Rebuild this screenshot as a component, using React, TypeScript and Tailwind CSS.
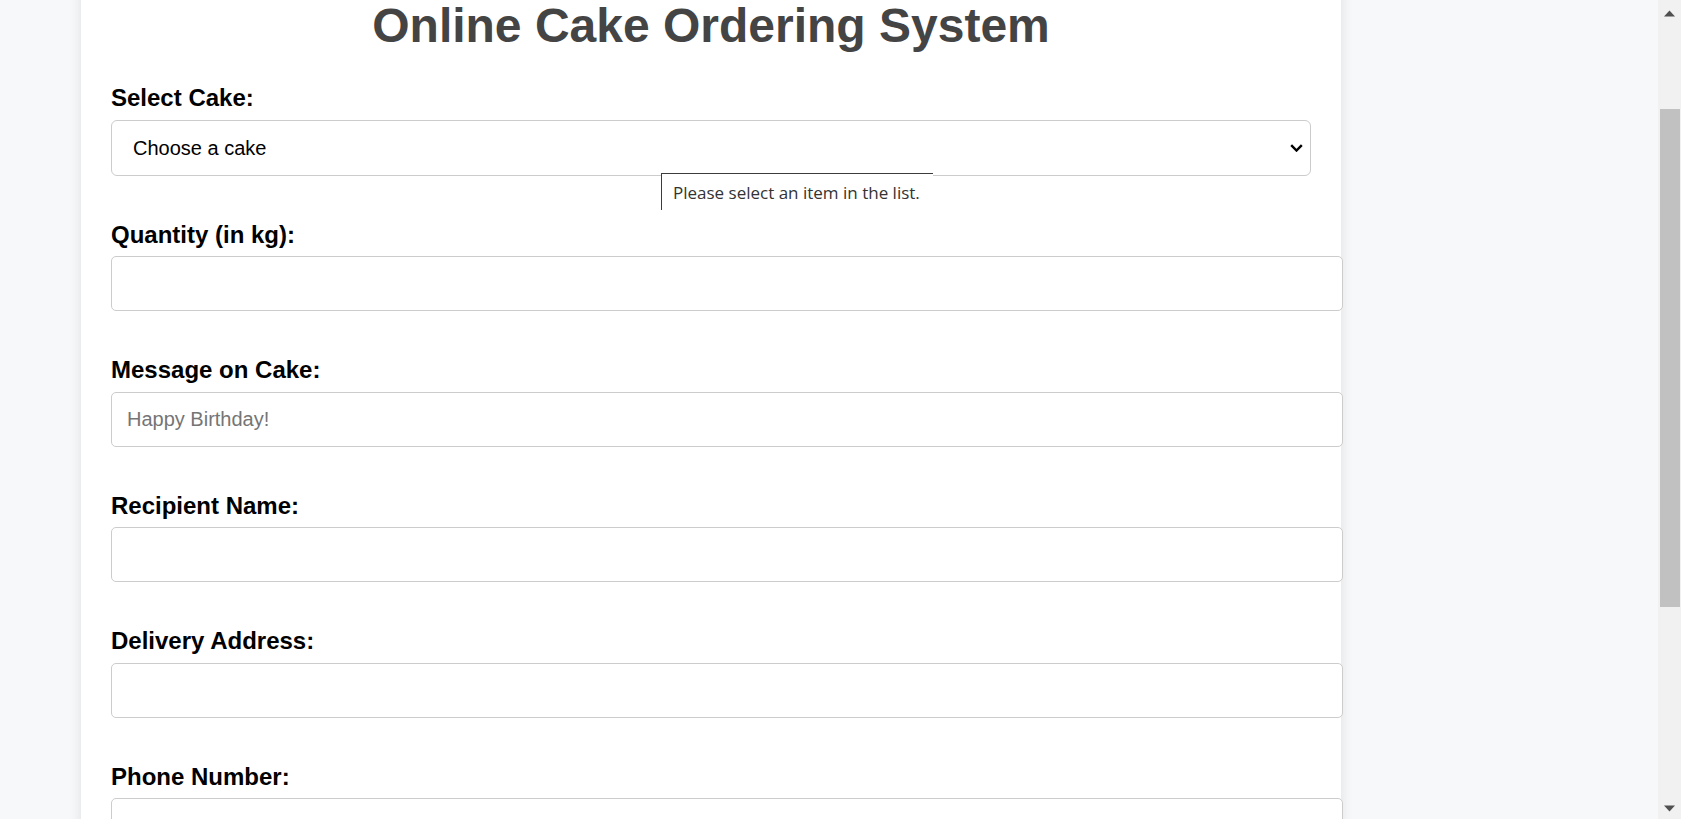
import type { ReactNode } from 'react';

const fieldFont = { fontFamily: '"Liberation Sans", Arial, sans-serif' };

function Field({ label, children }: { label: string; children: ReactNode }) {
  return (
    <div className="mb-[44px]">
      <label className="mb-[8px] block pt-[1px] text-[24px] font-bold leading-[27.5px] text-black">{label}</label>
      {children}
    </div>
  );
}

function TextInput({ placeholder }: { placeholder?: string }) {
  return (
    <input
      type="text"
      placeholder={placeholder}
      className="block h-[55px] w-[calc(100%+32px)] rounded-[5px] border border-[#cccccc] bg-white px-[15px] text-[20px] text-black outline-none placeholder:text-[#757575]"
    />
  );
}

function Scrollbar() {
  return (
    <div className="flex h-full w-[23px] shrink-0 flex-col items-center bg-[#f1f1f1]">
      <svg width="11" height="7" viewBox="0 0 11 7" className="mt-[10px]">
        <path d="M0 6.5 L5.5 0.5 L11 6.5 Z" fill="#505050" />
      </svg>
      <div className="ml-[2px] mr-[1px] mt-[92px] h-[498px] w-[20px] bg-[#c1c1c1]" />
      <div className="flex-1" />
      <svg width="11" height="7" viewBox="0 0 11 7" className="mb-[7px]">
        <path d="M0 0.5 L5.5 6.5 L11 0.5 Z" fill="#505050" />
      </svg>
    </div>
  );
}

export default function App() {
  return (
    <div className="flex h-screen w-full overflow-hidden bg-[#f7f8fa]" style={fieldFont}>
      <div className="flex-1 overflow-hidden">
        <div className="-mt-[32px] ml-[81px] w-[1260px] bg-white p-[30px] shadow-[0_0_12px_rgba(0,0,0,0.1)]">
          <h1 className="mb-[30px] text-center text-[48px] font-bold leading-[55px] text-[#444444]">
            Online Cake Ordering System
          </h1>

          <Field label="Select Cake:">
            <div className="relative">
              <select
                defaultValue=""
                className="block h-[56px] w-full appearance-none rounded-[6px] border border-[#cccccc] bg-white pl-[21px] pr-[40px] text-[20px] text-black outline-none"
              >
                <option value="">Choose a cake</option>
                <option value="chocolate">Chocolate Cake</option>
                <option value="vanilla">Vanilla Cake</option>
                <option value="redvelvet">Red Velvet Cake</option>
              </select>
              <svg
                width="13"
                height="8"
                viewBox="0 0 13 8"
                className="pointer-events-none absolute right-[8px] top-[24px]"
              >
                <path d="M1.2 1.2 L6.5 6.5 L11.8 1.2" fill="none" stroke="#000000" strokeWidth="2.4" />
              </svg>
              <div className="absolute left-[550px] top-[53px] z-10 h-[37px] w-[272px] border-l border-t border-[#3c3c3c] bg-white pl-[11px] pt-[8px]">
                <span
                  className="block whitespace-nowrap text-[17px] leading-[21px] text-[#333333]"
                  style={{ fontFamily: '"Open Sans", "Noto Sans", sans-serif' }}
                >
                  Please select an item in the list.
                </span>
              </div>
            </div>
          </Field>

          <Field label="Quantity (in kg):">
            <TextInput />
          </Field>
          <Field label="Message on Cake:">
            <TextInput placeholder="Happy Birthday!" />
          </Field>
          <Field label="Recipient Name:">
            <TextInput />
          </Field>
          <Field label="Delivery Address:">
            <TextInput />
          </Field>
          <Field label="Phone Number:">
            <TextInput />
          </Field>
        </div>
      </div>
      <Scrollbar />
    </div>
  );
}
